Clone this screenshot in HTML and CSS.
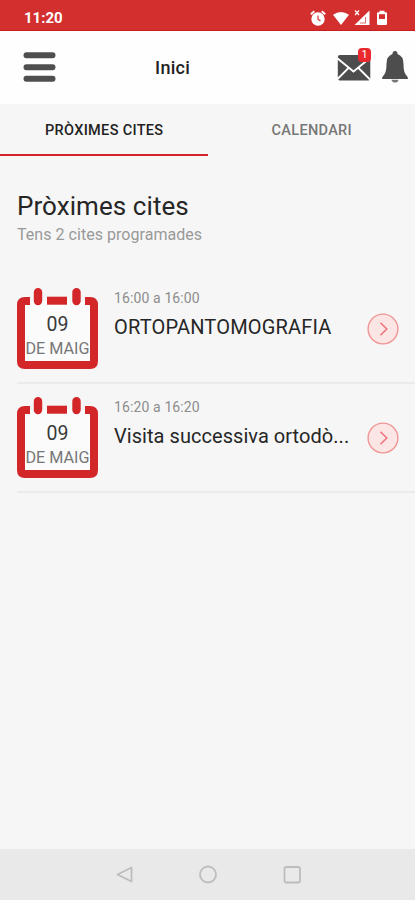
FILE: index.html
```html
<!DOCTYPE html>
<html lang="ca">
<head>
<meta charset="utf-8">
<meta name="viewport" content="width=device-width">
<title>Inici</title>
<link rel="stylesheet" href="styles.css">
</head>
<body>
<svg class="defs" width="0" height="0" aria-hidden="true">
  <symbol id="calendar" viewBox="0 0 81 81">
    <rect x="5" y="13" width="71" height="63" fill="#fbfbfb"/>
    <path d="M13 13H8Q4 13 4 17V73Q4 77 8 77H73Q77 77 77 73V17Q77 13 73 13H68" fill="none" stroke="#d32629" stroke-width="8"/>
    <path d="M30 12.700H50" stroke="#d32629" stroke-width="8"/>
    <path d="M21 4.200V13M59.500 4.200V13" stroke="#d32629" stroke-width="8.400" stroke-linecap="round"/>
  </symbol>
  <symbol id="next" viewBox="0 0 32 32">
    <circle cx="16" cy="16" r="14.900" fill="#fce5e5" stroke="#f09595" stroke-width="1.400"/>
    <path d="M13.500 9.700L19.800 16L13.500 22.300" fill="none" stroke="#ec7378" stroke-width="1.500"/>
  </symbol>
</svg>
<div class="screen">
  <div class="status">
    <span class="clock">11:20</span>
    <svg class="status-icons" width="80" height="20" viewBox="308 8 80 20" fill="#fff">
      <circle cx="318" cy="19" r="6.700"/>
      <path d="M310.800 14.200L314.300 11.200M325.200 14.200L321.700 11.200" stroke="#fff" stroke-width="1.800"/>
      <path d="M318 15.500V19.300L320.500 21" fill="none" stroke="#d32f2f" stroke-width="1.200"/>
      <path d="M333 14.800Q341 9.200 349 14.800L341 25Z"/>
      <path d="M369.500 10.500V25H354.500Z"/>
      <path d="M365.500 17V23M360 23H366" stroke="#d97070" stroke-width="1"/>
      <path d="M355 10.500L359 15M359 10.500L355 15" stroke="#fff" stroke-width="1.200"/>
      <path d="M379.500 10.800H384.500V12.200H386Q387 12.200 387 13.200V24Q387 25 386 25H378Q377 25 377 24V13.200Q377 12.200 378 12.200H379.500Z"/>
      <path d="M379 14.200H385V19H379Z" fill="#d32f2f"/>
    </svg>
  </div>
  <header class="header">
    <svg class="menu" width="34" height="32" viewBox="0 0 34 32" stroke="#4f4f4f" stroke-width="6" stroke-linecap="round"><path d="M4.500 4.300H30.500M4.500 16.200H30.500M4.500 27.800H30.500"/></svg>
    <h1 class="title">Inici</h1>
    <div class="mail">
      <svg width="34" height="26" viewBox="0 0 34 26"><rect x=".8" width="32.500" height="25.500" rx="2" fill="#4d4d4d"/><path d="M0 3L16.500 16.500L33 3M0 24.500L11.500 13M33 24.500L21.500 13" fill="none" stroke="#fff" stroke-width="1.800"/></svg>
      <span class="badge">1</span>
    </div>
    <svg class="bell" width="26" height="32" viewBox="0 0 26 32" fill="#4d4d4d"><path d="M13 0Q15.500 0 15.500 3Q21.500 5 21.500 13Q21.500 21 24 24Q26 25.500 26 28H0Q0 25.500 2 24Q4.500 21 4.500 13Q4.500 5 10.500 3Q10.500 0 13 0Z"/><path d="M9.500 28.700H16.500Q16 31.500 13 31.500T9.500 28.700Z" fill="#777"/></svg>
  </header>
  <nav class="tabs">
    <div class="tab active">PRÒXIMES CITES</div>
    <div class="tab">CALENDARI</div>
  </nav>
  <main class="main">
    <h2 class="heading">Pròximes cites</h2>
    <p class="sub">Tens 2 cites programades</p>
    <article class="row">
      <div class="date"><svg class="frame" width="81" height="81"><use href="#calendar"/></svg><span class="day">09</span><span class="month">DE MAIG</span></div>
      <div class="info"><div class="time">16:00 a 16:00</div><div class="name caps">ORTOPANTOMOGRAFIA</div></div>
      <svg class="next" width="32" height="32"><use href="#next"/></svg>
    </article>
    <article class="row">
      <div class="date"><svg class="frame" width="81" height="81"><use href="#calendar"/></svg><span class="day">09</span><span class="month">DE MAIG</span></div>
      <div class="info"><div class="time">16:20 a 16:20</div><div class="name">Visita successiva ortodò...</div></div>
      <svg class="next" width="32" height="32"><use href="#next"/></svg>
    </article>
  </main>
  <footer class="navbar">
    <svg width="415" height="51" viewBox="0 0 415 51" fill="none" stroke="#bdbdbd" stroke-width="1.800" stroke-linejoin="round"><path d="M131.500 18.500V32.500L117.500 25.500Z"/><circle cx="208" cy="25.500" r="8"/><rect x="284.500" y="18" width="15.500" height="15.500" rx="2"/></svg>
  </footer>
</div>
</body>
</html>
```
FILE: styles.css
```css
* { box-sizing: border-box; }
body { margin: 0; font-family: Roboto, "Liberation Sans", sans-serif; background: #f6f6f6; }
h1, h2, p { margin: 0; }
svg { display: block; flex: none; }
.defs { position: absolute; }
.screen { width: 415px; height: 900px; display: flex; flex-direction: column; overflow: hidden; }
.status { height: 31px; flex: none; background: #d32f2f; border-bottom: 1px solid #cb1c1c; display: flex; justify-content: space-between; padding: 8px 27px 0 24px; }
.clock { color: #fff; font-size: 15px; line-height: 20px; font-weight: 700; }
.header { height: 73px; flex: none; background: #fefefe; display: flex; align-items: flex-start; padding: 20px 7px 0 22px; }
.title { margin: 7px 0 0 99px; width: 182px; font-size: 18px; line-height: 20px; font-weight: 500; letter-spacing: .3px; color: #222; }
.mail { position: relative; margin-top: 4px; width: 34px; }
.badge { position: absolute; left: 21px; top: -7px; width: 13px; height: 14px; border-radius: 4px; background: #e9292d; color: #fff; font-size: 11px; line-height: 14px; text-align: center; }
.bell { margin-left: 11px; }
.tabs { height: 52px; flex: none; display: flex; }
.tab { width: 208px; text-align: center; font-size: 14.5px; line-height: 20px; font-weight: 500; letter-spacing: .32px; color: #777; padding: 17px 0 0 1px; border-bottom: 2px solid transparent; }
.active { color: #222; border-color: #d3222a; }
.main { flex: 1; padding: 34px 0 0 17px; }
.heading { font-size: 26px; line-height: 32px; font-weight: 400; letter-spacing: .07px; color: #262626; }
.sub { font-size: 16px; line-height: 20px; letter-spacing: .04px; color: #999; margin: 3px 0 30px; }
.row { height: 109px; display: flex; padding-top: 13px; border-bottom: 2px solid #ebebeb; }
.date { position: relative; width: 81px; height: 81px; padding-top: 26px; text-align: center; display: flex; flex-direction: column; align-items: center; }
.frame { position: absolute; left: 0; top: 0; }
.day, .month { position: relative; white-space: nowrap; }
.day { font-size: 19.5px; line-height: 22px; color: #3a3a3a; }
.month { font-size: 16.2px; line-height: 26px; color: #777; }
.info { margin-left: 16px; width: 253px; white-space: nowrap; }
.time { font-size: 14px; line-height: 18px; letter-spacing: .12px; color: #8d8d8d; margin-top: 1px; }
.name { font-size: 20px; line-height: 26px; letter-spacing: .05px; color: #262626; margin-top: 7px; }
.caps { letter-spacing: .19px; }
.next { margin-top: 25px; }
.navbar { height: 51px; flex: none; background: #e9e9e9; }
```
